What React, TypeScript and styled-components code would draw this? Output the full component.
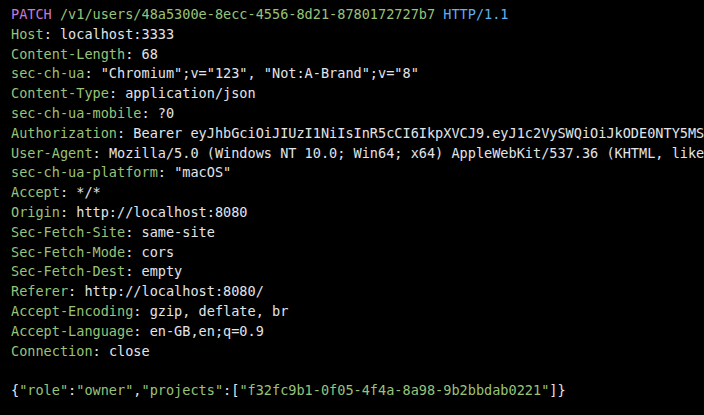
import React from "react";
import styled, { createGlobalStyle } from "styled-components";

const Global = createGlobalStyle`
  html, body { margin: 0; padding: 0; background: #000; }
  body { overflow: hidden; }
`;

const Terminal = styled.div`
  width: 704px;
  height: 415px;
  box-sizing: border-box;
  background: #000;
  padding: 5px 0 0 11px;
  overflow: hidden;
  font-family: "DejaVu Sans Mono", "Liberation Mono", monospace;
  font-size: 13.55px;
  line-height: 19.8px;
  color: #e2e4e8;
`;

const Line = styled.div`
  white-space: pre;
  height: 19.8px;
`;

const Tok = styled.span<{ $c: "method" | "path" | "proto" | "key" | "val" | "str" }>`
  color: ${({ $c }) =>
    $c === "method"
      ? "#c678dd"
      : $c === "proto"
      ? "#61afef"
      : $c === "path" || $c === "key" || $c === "str"
      ? "#98c379"
      : "#e2e4e8"};
`;

const headers: [string, string][] = [
  ["Host", "localhost:3333"],
  ["Content-Length", "68"],
  ["sec-ch-ua", "\"Chromium\";v=\"123\", \"Not:A-Brand\";v=\"8\""],
  ["Content-Type", "application/json"],
  ["sec-ch-ua-mobile", "?0"],
  [
    "Authorization",
    "Bearer eyJhbGciOiJIUzI1NiIsInR5cCI6IkpXVCJ9.eyJ1c2VySWQiOiJkODE0NTY5MS04ZjQ2LTQ1",
  ],
  [
    "User-Agent",
    "Mozilla/5.0 (Windows NT 10.0; Win64; x64) AppleWebKit/537.36 (KHTML, like Gecko) Chrome/123.0.0.0 Safari/537.36",
  ],
  ["sec-ch-ua-platform", "\"macOS\""],
  ["Accept", "*/*"],
  ["Origin", "http://localhost:8080"],
  ["Sec-Fetch-Site", "same-site"],
  ["Sec-Fetch-Mode", "cors"],
  ["Sec-Fetch-Dest", "empty"],
  ["Referer", "http://localhost:8080/"],
  ["Accept-Encoding", "gzip, deflate, br"],
  ["Accept-Language", "en-GB,en;q=0.9"],
  ["Connection", "close"],
];

export default function App() {
  return (
    <>
      <Global />
      <Terminal>
        <Line>
          <Tok $c="method">PATCH</Tok> <Tok $c="path">/v1/users/48a5300e-8ecc-4556-8d21-8780172727b7</Tok>{" "}
          <Tok $c="proto">HTTP/1.1</Tok>
        </Line>
        {headers.map(([k, v]) => (
          <Line key={k}>
            <Tok $c="key">{k}</Tok>
            <Tok $c="val">: {v}</Tok>
          </Line>
        ))}
        <Line />
        <Line>
          <Tok $c="val">{"{"}</Tok>
          <Tok $c="str">"role"</Tok>
          <Tok $c="val">:</Tok>
          <Tok $c="str">"owner"</Tok>
          <Tok $c="val">,</Tok>
          <Tok $c="str">"projects"</Tok>
          <Tok $c="val">:[</Tok>
          <Tok $c="str">"f32fc9b1-0f05-4f4a-8a98-9b2bbdab0221"</Tok>
          <Tok $c="val">{"]}"}</Tok>
        </Line>
      </Terminal>
    </>
  );
}
